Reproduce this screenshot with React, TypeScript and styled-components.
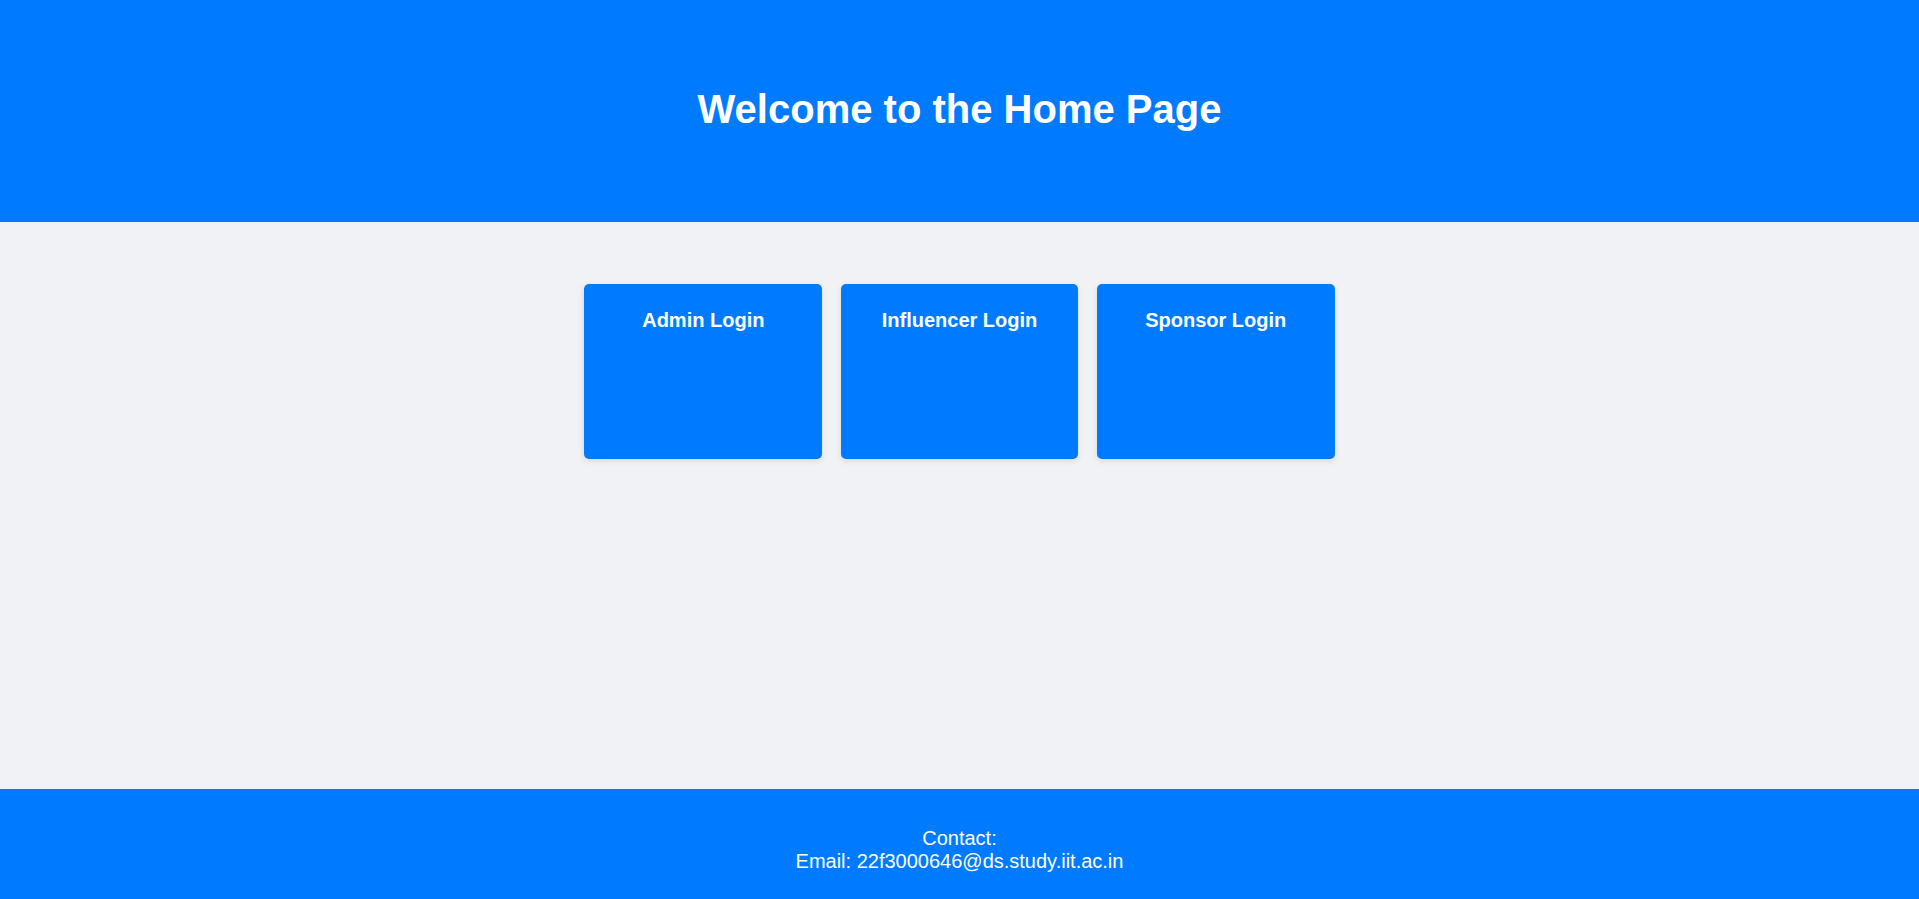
import React from "react";
import styled, { createGlobalStyle } from "styled-components";

const GlobalStyle = createGlobalStyle`
  html, body {
    margin: 0;
    padding: 0;
    background: #f0f2f5;
    font-family: "Liberation Sans", Arial, sans-serif;
  }
  * { box-sizing: border-box; }
`;

const Page = styled.div`
  display: flex;
  flex-direction: column;
  min-height: 100vh;
  background: #f0f2f5;
`;

const Header = styled.header`
  background: #007bff;
  color: #ffffff;
  text-align: center;
  height: 222px;
  padding-top: 86px;
`;

const Title = styled.h1`
  margin: 0;
  font-size: 40px;
  line-height: 46px;
  font-weight: 700;
`;

const Main = styled.main`
  flex: 1;
  display: flex;
  justify-content: center;
  align-items: flex-start;
  gap: 18.5px;
  padding-top: 62px;
`;

const Card = styled.a`
  display: block;
  width: 237.7px;
  height: 175px;
  background: #007bff;
  color: #ffffff;
  border-radius: 5px;
  box-shadow: 0 2px 6px rgba(0, 0, 0, 0.1);
  text-align: center;
  text-decoration: none;
  padding-top: 25px;
  cursor: pointer;
`;

const CardTitle = styled.h3`
  margin: 0;
  font-size: 20px;
  line-height: 23px;
  font-weight: 700;
`;

const Footer = styled.footer`
  background: #007bff;
  color: #ffffff;
  text-align: center;
  height: 110px;
  padding-top: 38px;
  font-size: 20px;
  line-height: 23px;
`;

const FooterLine = styled.div``;

const cards = ["Admin Login", "Influencer Login", "Sponsor Login"];

export default function App() {
  return (
    <>
      <GlobalStyle />
      <Page>
        <Header>
          <Title>Welcome to the Home Page</Title>
        </Header>
        <Main>
          {cards.map((c) => (
            <Card key={c}>
              <CardTitle>{c}</CardTitle>
            </Card>
          ))}
        </Main>
        <Footer>
          <FooterLine>Contact:</FooterLine>
          <FooterLine>Email: 22f3000646@ds.study.iit.ac.in</FooterLine>
        </Footer>
      </Page>
    </>
  );
}
